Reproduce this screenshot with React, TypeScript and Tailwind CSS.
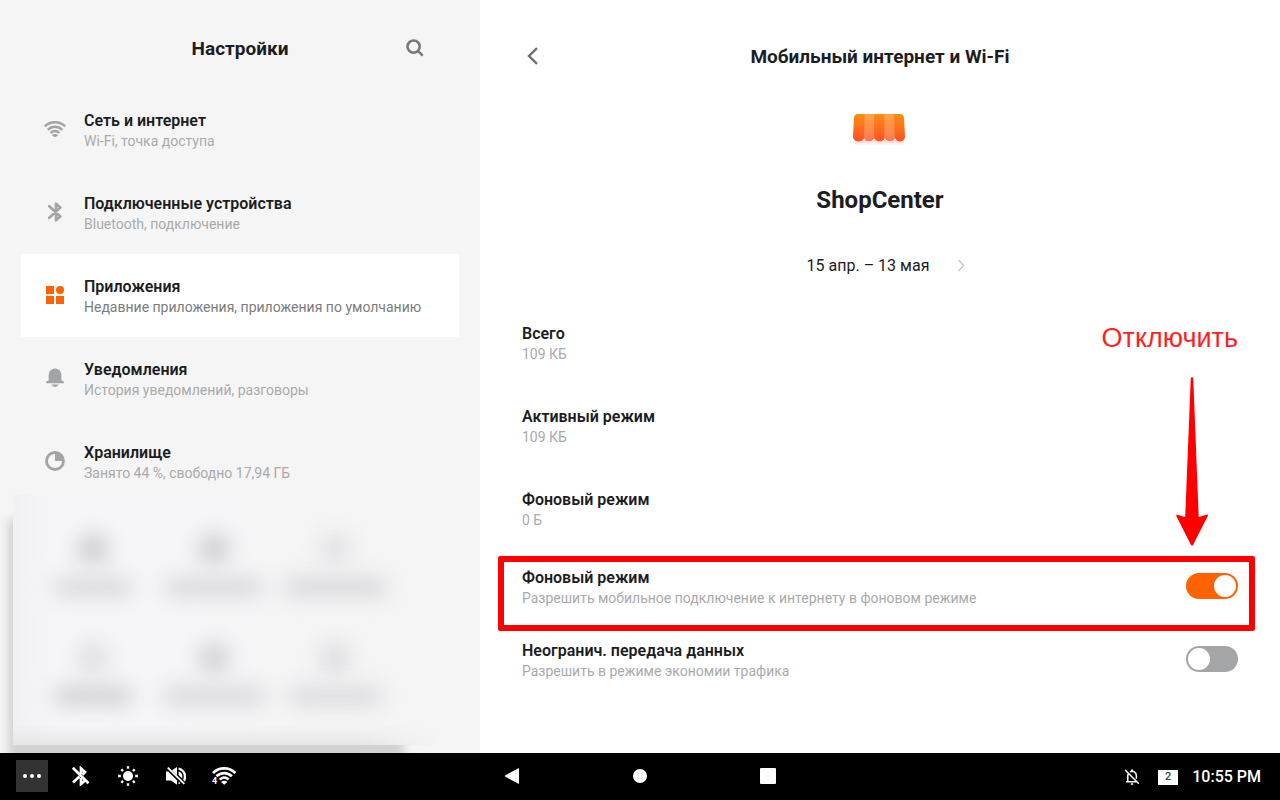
import { useState } from 'react';
import type { ReactNode } from 'react';
import clsx from 'clsx';

function WifiIcon() {
  return (
    <svg viewBox="0 0 22 16" className="h-4 w-[22px]" fill="none" stroke="currentColor" strokeWidth="2.500">
      <path d="M.8 5.300C6.600 0 15.400 0 21.200 5.300" />
      <path d="M3.800 8.800c4.100-4.100 10.300-4.100 14.400 0" />
      <path d="M6.600 12c2.500-2.600 6.300-2.600 8.800 0" />
      <path d="M7.800 14.200c1.600-1.600 4.800-1.600 6.400 0L11 16.400z" fill="currentColor" stroke="none" />
    </svg>
  );
}

function BluetoothIcon() {
  return (
    <svg
      viewBox="0 0 16 20"
      className="h-5 w-4"
      fill="none"
      stroke="currentColor"
      strokeWidth="2.7"
      strokeLinecap="round"
      strokeLinejoin="round"
    >
      <path d="M2.300 4.200l11 10.300-4.300 3.800V1.700l4.300 3.800L2.300 15.800" />
    </svg>
  );
}

function AppsIcon() {
  return (
    <svg viewBox="0 0 18 18" className="size-[18px]" fill="currentColor">
      <rect width="8" height="8" />
      <circle cx="14" cy="4" r="4" />
      <rect y="10" width="8" height="8" />
      <rect x="10" y="10" width="8" height="8" />
    </svg>
  );
}

function BellIcon() {
  return (
    <svg viewBox="0 0 18 20" className="h-5 w-[18px]" fill="currentColor">
      <path d="M2.600 12.400V6.800a6.400 6.400 0 0 1 12.800 0v5.600l2.400 1v1.800H.2v-1.800z" />
      <path d="M5.400 16.600h7.200a3.900 3.900 0 0 1-7.200 0z" />
    </svg>
  );
}

function StorageIcon() {
  return (
    <svg viewBox="0 0 20 20" className="size-5" fill="none" stroke="currentColor" strokeWidth="2.800">
      <circle cx="10" cy="10" r="8.500" />
      <path d="M10 2v8h8a8 8 0 0 0-8-8z" fill="currentColor" stroke="none" />
    </svg>
  );
}

function SearchIcon() {
  return (
    <svg viewBox="0 0 18 18" className="size-[18px]" fill="none" stroke="currentColor" strokeWidth="2.600">
      <circle cx="7.600" cy="7.600" r="6.100" />
      <path d="M11.900 11.900l4.800 4.800" />
    </svg>
  );
}

function ShopIcon() {
  return (
    <svg viewBox="0 0 56 44" className="h-11 w-14">
      <defs>
        <linearGradient id="awning" x1="0" y1="0" x2="0" y2="1">
          <stop offset="0" stopColor="#ff8d10" />
          <stop offset="1" stopColor="#ff5126" />
        </linearGradient>
        <linearGradient id="awningShade" x1="0" y1="0" x2="0" y2="1">
          <stop offset="0" stopColor="#ff5126" stopOpacity=".25" />
          <stop offset="1" stopColor="#ff5126" stopOpacity="0" />
        </linearGradient>
      </defs>
      <path d="M3 28h49v6H3z" fill="url(#awningShade)" />
      <path
        d="M6 2h42c2.600 0 3.800 1.400 4 4l1 18c.3 6.500-7.600 7-10 2.200-2 3.800-8 3.800-10.200 0-2 4.200-8.400 4.200-10.600 0-2.200 3.800-8.400 3.800-10.200 0C9.600 31 .7 30.500 1 24L2 6c.2-2.600 1.400-4 4-4z"
        fill="url(#awning)"
      />
      <path d="M12.500 2h9.700v24.200c-2.200 3.800-8.400 3.800-10.200 0z" fill="#fff" fillOpacity=".22" />
      <path d="M32.300 2h9.700l.9 24.200c-2.200 3.800-8 3.800-10.600 0z" fill="#fff" fillOpacity=".22" />
    </svg>
  );
}

const sections = [
  { title: 'Сеть и интернет', hint: 'Wi-Fi, точка доступа', icon: <WifiIcon /> },
  { title: 'Подключенные устройства', hint: 'Bluetooth, подключение', icon: <BluetoothIcon /> },
  { title: 'Приложения', hint: 'Недавние приложения, приложения по умолчанию', icon: <AppsIcon />, active: true },
  { title: 'Уведомления', hint: 'История уведомлений, разговоры', icon: <BellIcon /> },
  { title: 'Хранилище', hint: 'Занято 44 %, свободно 17,94 ГБ', icon: <StorageIcon /> },
];

const usage = [
  { title: 'Всего', value: '109 КБ' },
  { title: 'Активный режим', value: '109 КБ' },
  { title: 'Фоновый режим', value: '0 Б' },
];

function RowText({ title, hint, active }: { title: string; hint: string; active?: boolean }) {
  return (
    <span className="block">
      <span className="block text-base leading-[21px] font-semibold text-[#1c1d22]">{title}</span>
      <span className={clsx('block text-sm leading-[21px]', active ? 'text-[#7b7c7e]' : 'text-[#a9aaab]')}>{hint}</span>
    </span>
  );
}

interface SwitchRowProps {
  id: string;
  title: string;
  hint: string;
  checked: boolean;
  onChange: (value: boolean) => void;
  children?: ReactNode;
}

function SwitchRow({ id, title, hint, checked, onChange, children }: SwitchRowProps) {
  return (
    <div className="relative flex h-[73px] items-center justify-between px-[42px]">
      <label htmlFor={id}>
        <RowText title={title} hint={hint} />
      </label>
      <input
        id={id}
        type="checkbox"
        role="switch"
        checked={checked}
        onChange={(e) => onChange(e.target.checked)}
        className="mb-1 flex h-[26px] w-[52px] appearance-none items-center rounded-full bg-[#a3a5a7] px-[2px] before:size-[22px] before:rounded-full before:bg-white checked:justify-end checked:bg-[#ff6200]"
      />
      {children}
    </div>
  );
}

function Tile({ dot, bar }: { dot: string; bar: string }) {
  return (
    <div className="flex flex-col items-center gap-3">
      <div className={clsx('size-8 rounded-full blur-[10px]', dot)} />
      <div className={clsx('h-5 rounded-full blur-[10px]', bar)} />
    </div>
  );
}

// Quick panel in the sidebar corner, unreadable behind frosted glass
function FrostedPanel() {
  return (
    <div className="relative -mt-2 flex flex-1 overflow-hidden pb-2 pl-[13px]">
      <div className="absolute top-6 right-[76px] -bottom-2 left-2 bg-[#d2d2d2] blur-[5px]" />
      <div className="relative mr-10 grid flex-1 grid-cols-3 content-start gap-y-[45px] bg-linear-to-r from-[#f1f1f3] via-[#f6f5f8] via-10% to-[#f5f5f5] pt-[38px] pr-[45px] pl-[20px]">
        <div className="absolute inset-x-0 bottom-0 h-5 bg-linear-to-t from-[#e6e6e7] to-transparent mask-r-from-80%" />
        <Tile dot="bg-[#cfcfd3]" bar="w-[80px] bg-[#dadade]" />
        <Tile dot="bg-[#d0d0d4]" bar="w-[100px] bg-[#dadade]" />
        <Tile dot="bg-[#e2e2e5]" bar="w-[104px] bg-[#d9d9dd]" />
        <Tile dot="bg-[#dfdfe3]" bar="w-[80px] bg-[#d2d2d7]" />
        <Tile dot="bg-[#d3d3d7]" bar="w-[104px] bg-[#dadade]" />
        <Tile dot="bg-[#dedee1]" bar="w-[96px] bg-[#dcdce0]" />
      </div>
    </div>
  );
}

function Sidebar() {
  return (
    <aside className="flex flex-col bg-[#f5f5f5]">
      <header className="relative flex h-[88px] items-center justify-center pt-2">
        <h1 className="pt-0.5 text-[19px] font-bold text-[#1c1d22]">Настройки</h1>
        <button type="button" aria-label="Поиск" className="absolute right-14 text-[#77787a]">
          <SearchIcon />
        </button>
      </header>
      <nav className="mx-[21px]">
        {sections.map((s) => (
          <a
            key={s.title}
            href="#"
            className={clsx('flex h-[83px] items-center gap-3 rounded-[2px] pt-0.5 pl-5', s.active && 'bg-white')}
          >
            <span
              className={clsx('mr-[3px] mb-1 flex w-7 justify-center', s.active ? 'text-[#ff6200]' : 'text-[#a3a4a6]')}
            >
              {s.icon}
            </span>
            <RowText title={s.title} hint={s.hint} active={s.active} />
          </a>
        ))}
      </nav>
      <FrostedPanel />
    </aside>
  );
}

function Details() {
  const [background, setBackground] = useState(true);
  const [unlimited, setUnlimited] = useState(false);

  return (
    <main className="bg-white">
      <header className="relative flex h-28 items-center justify-center">
        <button type="button" aria-label="Назад" className="absolute left-11 text-[#6d6e70]">
          <svg viewBox="0 0 16 18" className="h-[18px] w-4" fill="none" stroke="currentColor" strokeWidth="2.4">
            <path d="M13 1.200L5 9l8 7.800" />
          </svg>
        </button>
        <h2 className="pt-0.5 text-[19px] font-bold text-[#1c1d22]">Мобильный интернет и Wi-Fi</h2>
      </header>

      <div className="flex h-[190px] flex-col items-center">
        <ShopIcon />
        <h3 className="mt-7 text-2xl font-bold text-[#1c1d22]">ShopCenter</h3>
        <button type="button" className="mt-[38px] flex items-center gap-6 pl-4 text-base text-[#1c1d22]">
          15 апр. – 13 мая
          <svg viewBox="0 0 16 16" className="size-4" fill="none" stroke="#c9cacb" strokeWidth="1.5">
            <path d="M5.500 2l5 5.500-5 5.500" />
          </svg>
        </button>
      </div>

      <dl>
        {usage.map((u) => (
          <div key={u.title} className="flex h-[83px] flex-col justify-center px-[42px]">
            <dt className="text-base leading-[21px] font-semibold text-[#1c1d22]">{u.title}</dt>
            <dd className="text-sm leading-[21px] text-[#a9aaab]">{u.value}</dd>
          </div>
        ))}
      </dl>

      <SwitchRow
        id="background"
        title="Фоновый режим"
        hint="Разрешить мобильное подключение к интернету в фоновом режиме"
        checked={background}
        onChange={setBackground}
      >
        {/* callout: frame, arrow and caption over the page */}
        <div className="pointer-events-none absolute top-[5px] right-[25px] -bottom-[7px] left-[18px] rounded-[2px] border-[6px] border-[#ff0000]" />
        <div className="pointer-events-none absolute right-[42px] bottom-[78px] flex flex-col items-end gap-5">
          <span className="font-['Liberation_Sans',sans-serif] text-[27px] leading-9 text-[#ff1f1f]">Отключить</span>
          <svg viewBox="0 0 32 170" className="mr-[30px] h-[170px] w-8" fill="#ff0000">
            <path d="M16 1c.8 0 1.200 1 1.300 3l5.400 137 8.500-2.400c.8-.2.900.700.600 1.400L17 169c-.5.900-1.500.900-2 0L.300 140c-.3-.7.200-1.500 1-1.300l7.900 2.300L14.700 4c.1-2 .5-3 1.300-3z" />
          </svg>
        </div>
      </SwitchRow>
      <SwitchRow
        id="unlimited"
        title="Неогранич. передача данных"
        hint="Разрешить в режиме экономии трафика"
        checked={unlimited}
        onChange={setUnlimited}
      />
    </main>
  );
}

function BarButton({ label, className, children }: { label: string; className?: string; children: ReactNode }) {
  return (
    <button type="button" aria-label={label} className={clsx('flex size-8 items-center justify-center', className)}>
      {children}
    </button>
  );
}

function SystemBar() {
  return (
    <footer className="grid h-[47px] grid-cols-[1fr_auto_1fr] items-center bg-black pb-px text-white">
      <div className="flex gap-4 pl-4">
        <BarButton label="Ещё" className="bg-[#333333]">
          <svg viewBox="0 0 18 4" className="h-1 w-[18px]" fill="currentColor">
            <circle cx="2" cy="2" r="2" />
            <circle cx="9" cy="2" r="2" />
            <circle cx="16" cy="2" r="2" />
          </svg>
        </BarButton>
        <BarButton label="Bluetooth выключен">
          <svg viewBox="0 0 20 20" className="size-5" fill="none" stroke="currentColor" strokeWidth="2.700">
            <path d="M2.800 1.800l15.700 15.400" />
            <path d="M11 8V2.500l4 3.600-2.600 2.700" />
            <path d="M3 16.500l6.500-5.900M11 12v6l3.800-3.200" />
          </svg>
        </BarButton>
        <BarButton label="Яркость">
          <svg viewBox="0 0 20 20" className="size-5" fill="none" stroke="currentColor" strokeWidth="2.300">
            <circle cx="10" cy="10" r="5" fill="currentColor" stroke="none" />
            <path d="M10 .200v2.600M10 17.200v2.600M.200 10h2.600M17.200 10h2.600M3.300 3.300l1.800 1.800M14.900 14.900l1.800 1.800M3.300 16.700l1.800-1.800M14.900 5.100l1.800-1.800" />
          </svg>
        </BarButton>
        <BarButton label="Без звука">
          <svg viewBox="0 0 20 20" className="size-5" fill="currentColor">
            <path d="M0 5.500h2.200L11 14.200v4.600L5 14.500H0zM6 4.300L11 1v8.300z" />
            <path d="M12.600 1.500c7.600 1.700 9.200 9.300 6.300 14l-1.800-1.800c1.800-3.500.3-8.700-4.500-9.900zM12.600 5.600c3.400 1 4.300 3.900 3.500 7l-3.500-3.500zM12.600 15.400l1.900 1.900-1.900.9z" />
            <path d="M1.800 1.600l16.500 16.300" stroke="currentColor" strokeWidth="1.900" />
          </svg>
        </BarButton>
        <BarButton label="Wi-Fi">
          <svg viewBox="0 0 24 18" className="h-[18px] w-6" fill="none" stroke="currentColor" strokeWidth="2.600">
            <path d="M1 6C7-.2 17.400-.2 23.400 6" />
            <path d="M4.500 9.300c4.400-4.300 11-4.300 15.400 0" />
            <path d="M7.800 12.600c2.700-2.700 6.100-2.700 8.800 0" />
            <path d="M9 15c1.700-1.700 4.700-1.700 6.400 0l-3.200 2.800z" fill="currentColor" stroke="none" />
            <text x="0" y="17" fontSize="9" fontWeight="700" fill="currentColor" stroke="none">
              4
            </text>
          </svg>
        </BarButton>
      </div>

      <div className="flex gap-24">
        <BarButton label="Назад">
          <svg viewBox="0 0 14 16" className="h-4 w-3.5" fill="currentColor">
            <path d="M14 0v16L0 8.600V7.400z" />
          </svg>
        </BarButton>
        <BarButton label="Домой">
          <span className="size-3.5 rounded-full bg-white" />
        </BarButton>
        <BarButton label="Недавние">
          <span className="size-4 rounded-[1px] bg-white" />
        </BarButton>
      </div>

      <div className="flex items-center justify-end pt-0.5 pr-[19px]">
        <svg viewBox="0 0 16 16" className="mr-[18px] size-4" fill="none" stroke="currentColor" strokeWidth="1.500">
          <path d="M1.200 1l13.600 13.800" />
          <path d="M2 12.700h10.400M3.800 12.500V7c0-.9.200-1.700.6-2.400M6 2.900c2.700-1.700 6.400.3 6.400 3.800v3" />
          <path d="M7 1.300h2M6.800 15h2.400" />
        </svg>
        <span className="mr-[14px] flex h-[15px] w-5 items-center justify-center bg-white text-[11px] font-medium text-[#444444]">
          2
        </span>
        <time className="text-base font-medium">10:55 PM</time>
      </div>
    </footer>
  );
}

export default function App() {
  return (
    <div className="flex min-h-screen flex-col font-[Roboto,sans-serif]">
      <div className="grid flex-1 grid-cols-[3fr_5fr]">
        <Sidebar />
        <Details />
      </div>
      <SystemBar />
    </div>
  );
}
